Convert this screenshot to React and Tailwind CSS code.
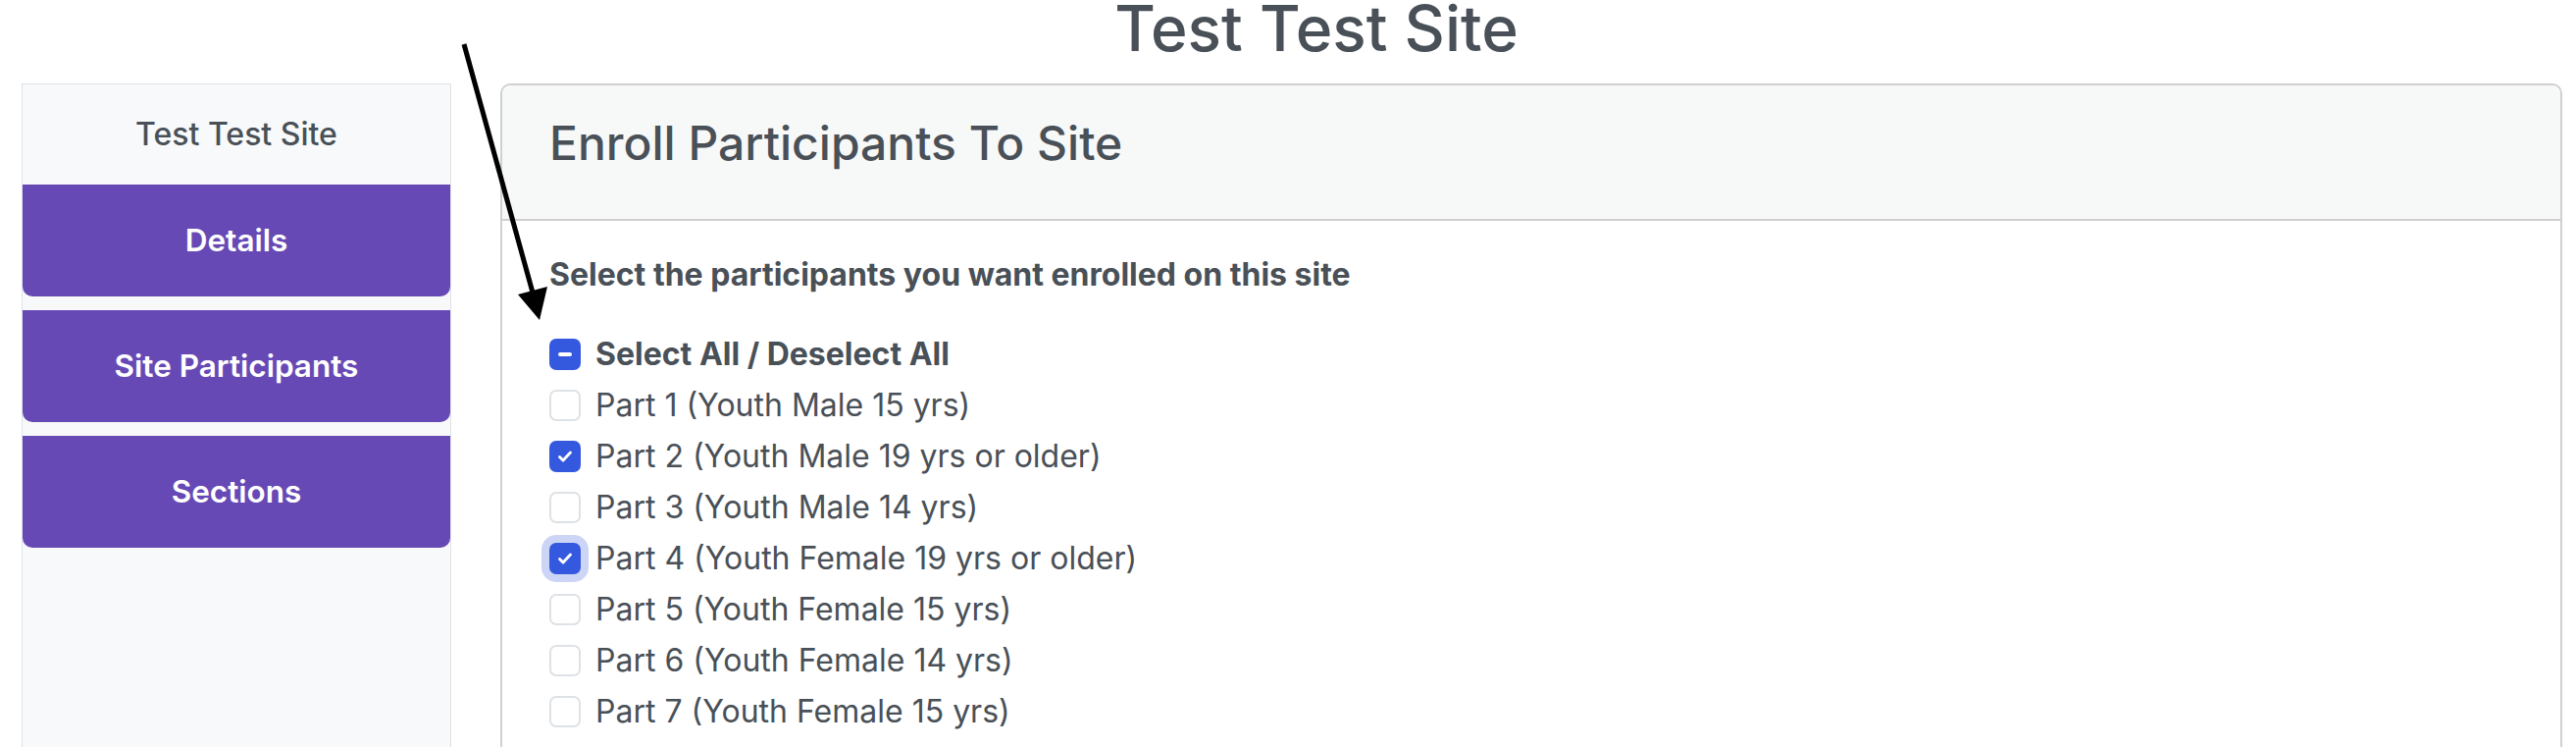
import React from 'react'

const participants = [
  { label: 'Part 1 (Youth Male 15 yrs)', checked: false },
  { label: 'Part 2 (Youth Male 19 yrs or older)', checked: true },
  { label: 'Part 3 (Youth Male 14 yrs)', checked: false },
  { label: 'Part 4 (Youth Female 19 yrs or older)', checked: true, focused: true },
  { label: 'Part 5 (Youth Female 15 yrs)', checked: false },
  { label: 'Part 6 (Youth Female 14 yrs)', checked: false },
  { label: 'Part 7 (Youth Female 15 yrs)', checked: false },
]

const Check = ({ state, focused }) => {
  if (state === 'off') {
    return <span className="w-8 h-8 shrink-0 rounded-[7px] border-2 border-[#dee2e6] bg-white" />
  }
  return (
    <span
      className={
        'w-8 h-8 shrink-0 rounded-[7px] bg-[#3559de] flex items-center justify-center ' +
        (focused ? 'ring-8 ring-[#cdd5f6]' : '')
      }
    >
      {state === 'mixed' ? (
        <span className="w-[14px] h-[4px] rounded-full bg-white" />
      ) : (
        <svg width="22" height="22" viewBox="0 0 20 20" fill="none">
          <path d="M5 10.5l3.2 3.2 6.8-7.4" stroke="white" strokeWidth="2.6" strokeLinecap="round" strokeLinejoin="round" />
        </svg>
      )}
    </span>
  )
}

const NavButton = ({ children }) => (
  <button className="h-[114px] w-full mb-[14px] rounded-b-[10px] bg-[#6749b6] text-white text-[31.5px] font-semibold">
    {children}
  </button>
)

export default function App() {
  return (
    <div className="relative h-[761px] overflow-hidden bg-white font-['Inter',sans-serif] text-[#495057]">
      <h1 className="text-center text-[64px] leading-none font-medium pl-[58px] -mt-[3px]">Test Test Site</h1>

      <div className="flex items-start gap-[50px] pl-[22px] pr-[14px] mt-[24px]">
        {/* sidebar */}
        <div className="w-[438px] h-[700px] shrink-0 border border-[#dee2e6] bg-[#f8f9fa]">
          <div className="h-[102px] flex items-center justify-center text-[32px] font-medium">Test Test Site</div>
          <NavButton>Details</NavButton>
          <NavButton>Site Participants</NavButton>
          <NavButton>Sections</NavButton>
        </div>

        {/* card */}
        <div className="flex-1 border-2 border-[#d0d0d0] rounded-[10px] bg-white">
          <div className="bg-[#f7f8f8] border-b-2 border-[#d0d0d0] rounded-t-[10px] pl-12 pt-[30px] pb-[48px]">
            <h2 className="text-[48px] leading-[1.2] font-medium">Enroll Participants To Site</h2>
          </div>
          <div className="pl-12 pt-[36px] pb-10">
            <p className="text-[32px] leading-[1.2] font-bold">Select the participants you want enrolled on this site</p>
            <div className="mt-[36px]">
              <label className="h-[52px] flex items-center gap-[15px]">
                <Check state="mixed" />
                <span className="text-[32px] leading-[1.2] font-bold">Select All / Deselect All</span>
              </label>
              {participants.map((p) => (
                <label key={p.label} className="h-[52px] flex items-center gap-[15px]">
                  <Check state={p.checked ? 'on' : 'off'} focused={p.focused} />
                  <span className="text-[32px] leading-[1.2]">{p.label}</span>
                </label>
              ))}
            </div>
          </div>
        </div>
      </div>

      {/* annotation arrow */}
      <svg className="absolute left-0 top-0 pointer-events-none" width="2626" height="761">
        <line x1="473" y1="45" x2="543" y2="298" stroke="black" strokeWidth="5" />
        <polygon points="528,300 558,292 550,326" fill="black" />
      </svg>
    </div>
  )
}
